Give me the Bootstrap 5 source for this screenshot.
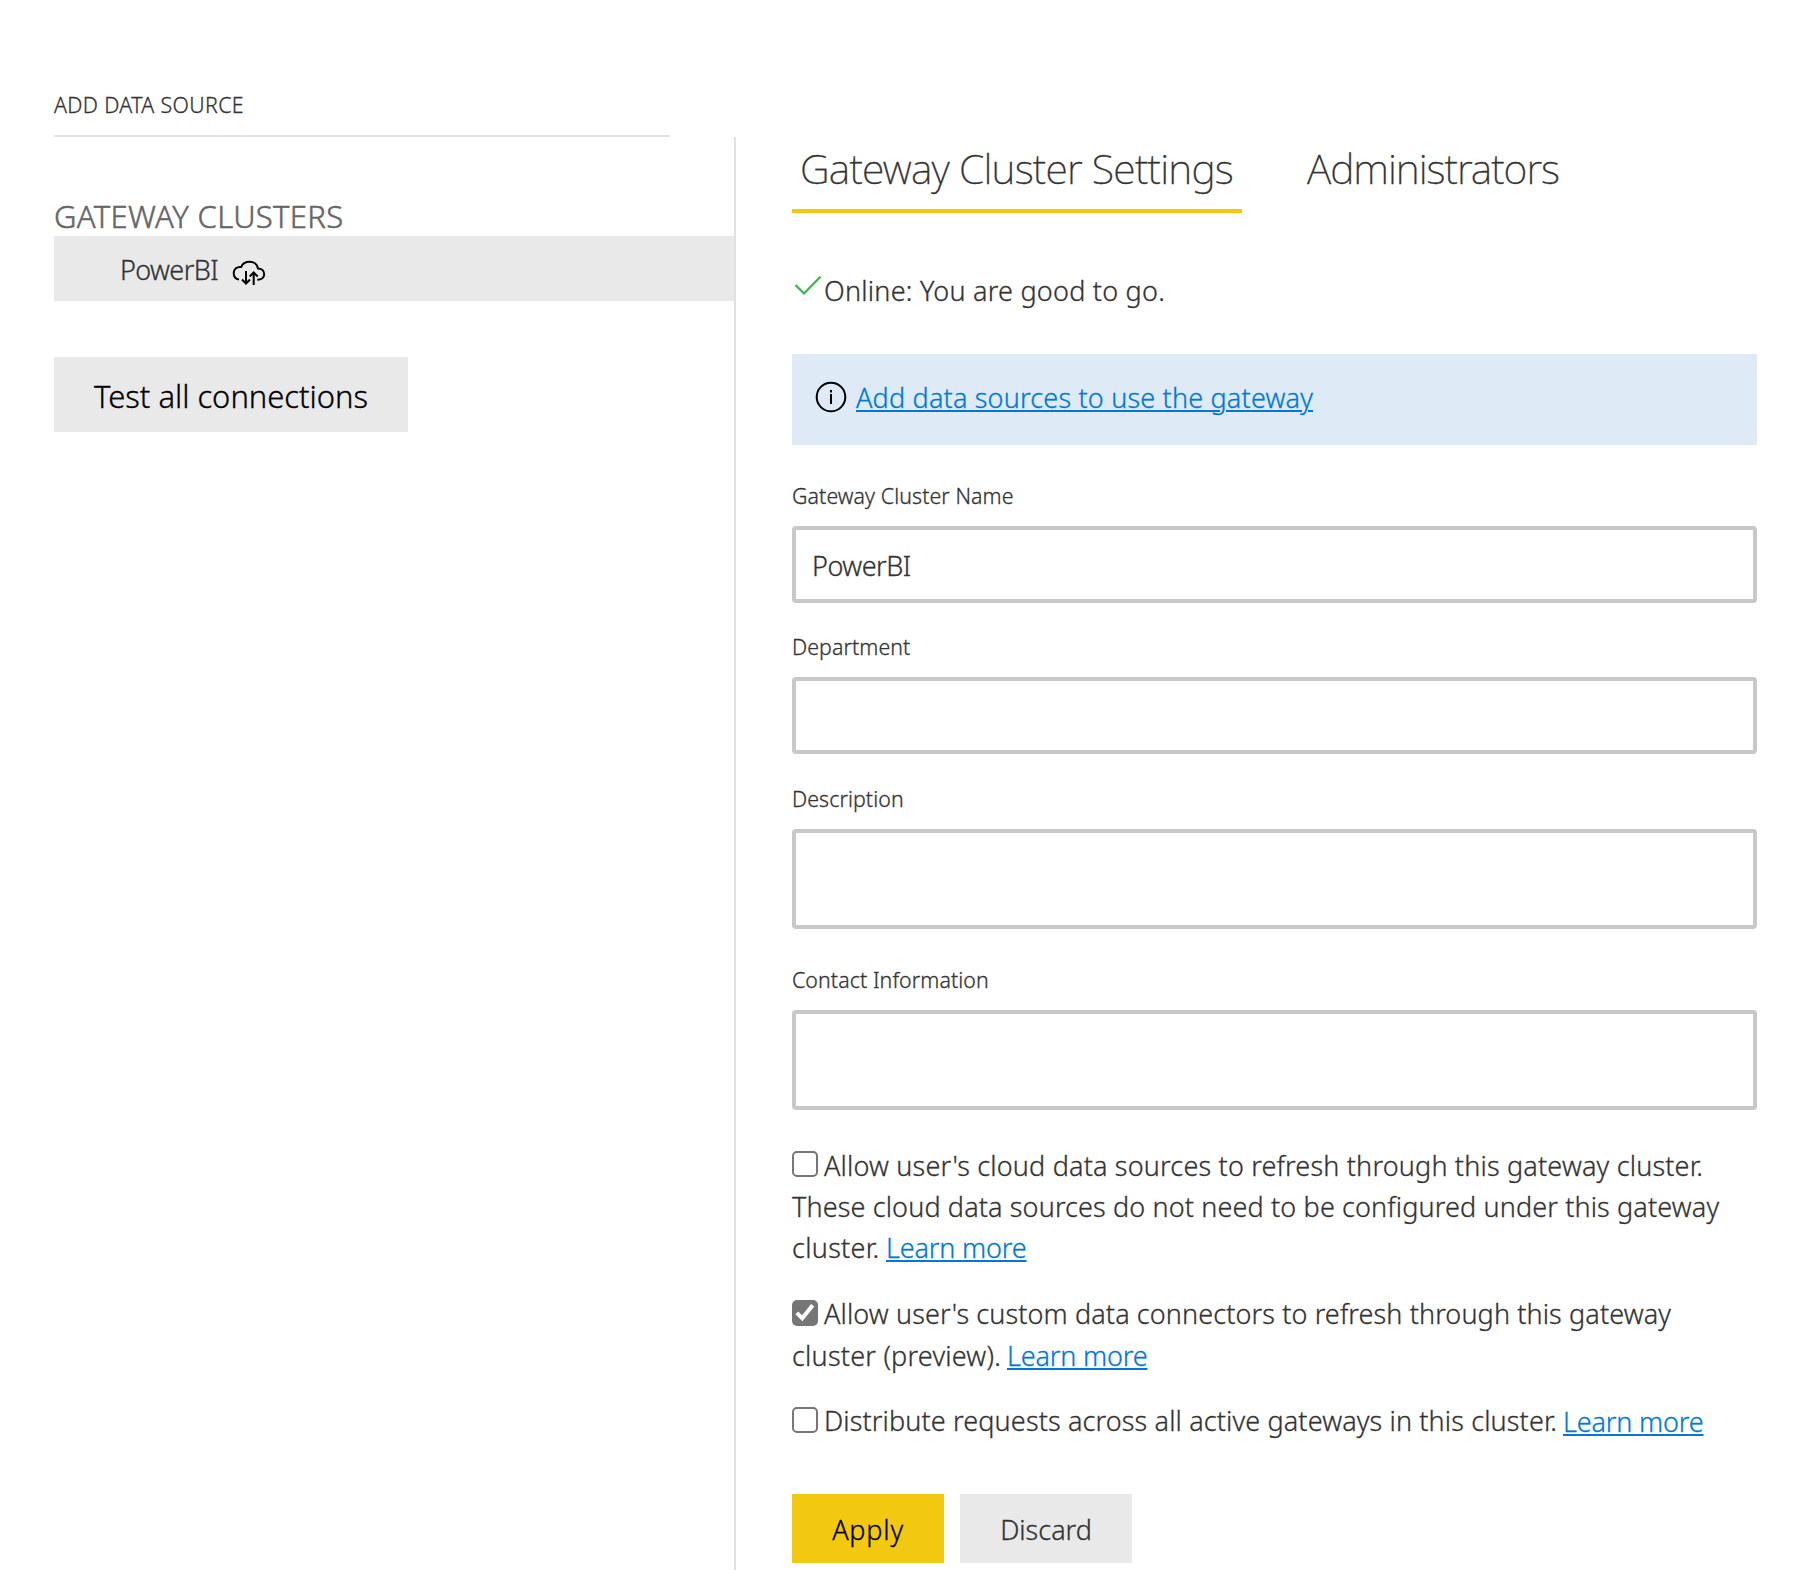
<!DOCTYPE html>
<html lang="en">
<head>
<meta charset="utf-8">
<meta name="viewport" content="width=device-width, initial-scale=1">
<title>Gateway Cluster Settings</title>
<link rel="stylesheet" href="https://cdn.jsdelivr.net/npm/bootstrap@5.3.0/dist/css/bootstrap.min.css">
<style>
body{font-family:"Noto Sans","Open Sans",sans-serif;font-size:27px;font-weight:300;color:#333;background:#fff;overflow:hidden;-webkit-text-stroke:.3px currentColor}
.add-source{width:616px;height:137px;margin-left:54px;border-bottom:2px solid #e1e1e1;padding-top:90px;font-size:21.3px;line-height:29px;letter-spacing:.371px}
.side{width:682px;margin-left:54px;height:1433px;border-right:2px solid #e1e1e1}
.side-title{font-size:31px;font-weight:300;line-height:40px;color:#666;padding-top:59px;height:99px;margin:0;letter-spacing:.314px;-webkit-text-stroke:.5px #666}
.cluster-item{height:65px;background:#e9e9e9;padding-left:66px;line-height:67px}
.cluster-name{width:98px;letter-spacing:-.6px}
.cloud-icon{margin:20px 0 0 10px}
.btn-flat{background:#e9e9e9;border:0;border-radius:0;padding:0;color:#333;font-size:27px;font-weight:300;height:69px;line-height:71px}
.btn-test{width:354px;height:75px;margin-top:56px;font-size:31px;color:#000;line-height:79px;letter-spacing:-.03px}
.btn-apply{width:152px;background:#f2c811;color:#000;letter-spacing:.8px}
.btn-discard{width:172px}
.settings{width:965px;margin-left:56px}
.tabs{gap:57px}
.tab-item{font-size:41px;font-weight:200;line-height:62px;padding:0 8px 10px;border-bottom:4px solid transparent;color:#333;letter-spacing:-1.016px;white-space:nowrap}
.tab-item.active{border-color:#f2c811;width:450px;letter-spacing:-.783px}
.status-line{line-height:42px;height:40px;margin-top:57px;letter-spacing:.233px}
.notice{background:#deeaf6;height:91px;margin-top:44px;padding:23px 0 0 23px;line-height:42px;letter-spacing:.185px}
.settings a{color:#0078d7;text-decoration:underline;text-decoration-thickness:2px;text-underline-offset:2px}
.field-label{font-size:21.3px;line-height:29px;margin:29px 0 16px;display:block;letter-spacing:.1px}
.label-wide{margin-top:36px}
.label-mid{margin-top:30px}
.field.form-control{border:4px solid #c8c8c8;border-radius:4px;height:77px;padding:2px 16px 0;font-family:inherit;font-size:27px;font-weight:300;color:#333;resize:none;box-shadow:none;letter-spacing:-.5px}
.field-tall.form-control{height:100px}
.opt{line-height:41.5px;white-space:nowrap;letter-spacing:.13px}
.opt a{letter-spacing:-.161px}
.opt-cloud{margin-top:35px;line-height:41.2px}
.opt-cloud .line-a{letter-spacing:.179px}
.opt-custom{margin-top:24.4px;letter-spacing:.11px}
.opt-spread{margin-top:24px}
.opt-spread a{padding-top:1px}
.tail-cloud{width:94px;letter-spacing:.3px}
.tail-custom{width:215px;letter-spacing:.218px}
.tail-spread{width:739px}
.chk.form-check-input{width:26px;height:26px;margin:7px 6px 0 0;border:2px solid #767676;border-radius:5px;flex:none}
.opt-cloud .chk.form-check-input{margin-top:6px}
.chk.form-check-input:checked{background-color:#767676;border:0;background-size:26px 26px;background-image:url("data:image/svg+xml,%3Csvg xmlns='http://www.w3.org/2000/svg' viewBox='0 0 26 26'%3E%3Cpath d='M4.800 12.800L10.300 18.300L20.700 5.300' fill='none' stroke='%23fff' stroke-width='4'/%3E%3C/svg%3E")}
.actions{margin-top:51.5px}
</style>
</head>
<body>
<header class="add-source">ADD DATA SOURCE</header>
<div class="d-flex">
  <aside class="side">
    <h2 class="side-title">GATEWAY CLUSTERS</h2>
    <div class="cluster-item d-flex">
      <span class="cluster-name">PowerBI</span>
      <svg class="cloud-icon" width="38" height="30" viewBox="228 256 38 30" fill="none" stroke="#000" stroke-width="2"><path d="M239 279.500C235.500 279 233.700 276.500 233.700 273.300C233.700 269 237 266.300 241.200 267C242.500 263.500 246 261.800 249.700 261.800C254 261.800 257.300 264.500 258 268.500C261.500 268.500 264.200 270.800 264.200 274.200C264.200 277.500 261.500 279.800 257.300 279.800"/><path d="M246 271v12.500M242 279.500l4 4l4-4M253.700 285v-12.500M249.700 276.500l4-4l4 4"/></svg>
    </div>
    <button class="btn btn-flat btn-test">Test all connections</button>
  </aside>
  <main class="settings">
    <nav class="tabs d-flex">
      <div class="tab-item active">Gateway Cluster Settings</div>
      <div class="tab-item">Administrators</div>
    </nav>
    <div class="status-line d-flex">
      <svg width="32" height="40" viewBox="792 270 32 40" fill="none" stroke="#3bb44a" stroke-width="2.200"><path d="M795.500 285L804 293.500L820.500 276.700"/></svg>
      <span>Online: You are good to go.</span>
    </div>
    <div class="notice d-flex">
      <svg width="41" height="40" viewBox="815 377 41 40" fill="none" stroke="#000" stroke-width="2"><circle cx="831" cy="397" r="14.300"/><path d="M831 394v10M831 390v2.500"/></svg>
      <a href="#">Add data sources to use the gateway</a>
    </div>
    <label class="field-label label-wide" for="name">Gateway Cluster Name</label>
    <input id="name" class="form-control field" value="PowerBI">
    <label class="field-label" for="dept">Department</label>
    <input id="dept" class="form-control field">
    <label class="field-label label-mid" for="desc">Description</label>
    <textarea id="desc" class="form-control field field-tall"></textarea>
    <label class="field-label label-wide" for="contact">Contact Information</label>
    <textarea id="contact" class="form-control field field-tall"></textarea>
    <div class="opt opt-cloud">
      <div class="d-flex line-a"><input type="checkbox" class="form-check-input chk"><span>Allow user's cloud data sources to refresh through this gateway cluster.</span></div>
      <div>These cloud data sources do not need to be configured under this gateway</div>
      <div class="d-flex"><span class="tail-cloud">cluster.</span><a href="#">Learn more</a></div>
    </div>
    <div class="opt opt-custom">
      <div class="d-flex"><input type="checkbox" checked class="form-check-input chk"><span>Allow user's custom data connectors to refresh through this gateway</span></div>
      <div class="d-flex"><span class="tail-custom">cluster (preview).</span><a href="#">Learn more</a></div>
    </div>
    <div class="opt opt-spread">
      <div class="d-flex"><input type="checkbox" class="form-check-input chk"><span class="tail-spread">Distribute requests across all active gateways in this cluster.</span><a href="#">Learn more</a></div>
    </div>
    <div class="actions d-flex gap-3">
      <button class="btn btn-flat btn-apply">Apply</button>
      <button class="btn btn-flat btn-discard">Discard</button>
    </div>
  </main>
</div>
<script src="https://cdn.jsdelivr.net/npm/bootstrap@5.3.0/dist/js/bootstrap.bundle.min.js"></script>
</body>
</html>
